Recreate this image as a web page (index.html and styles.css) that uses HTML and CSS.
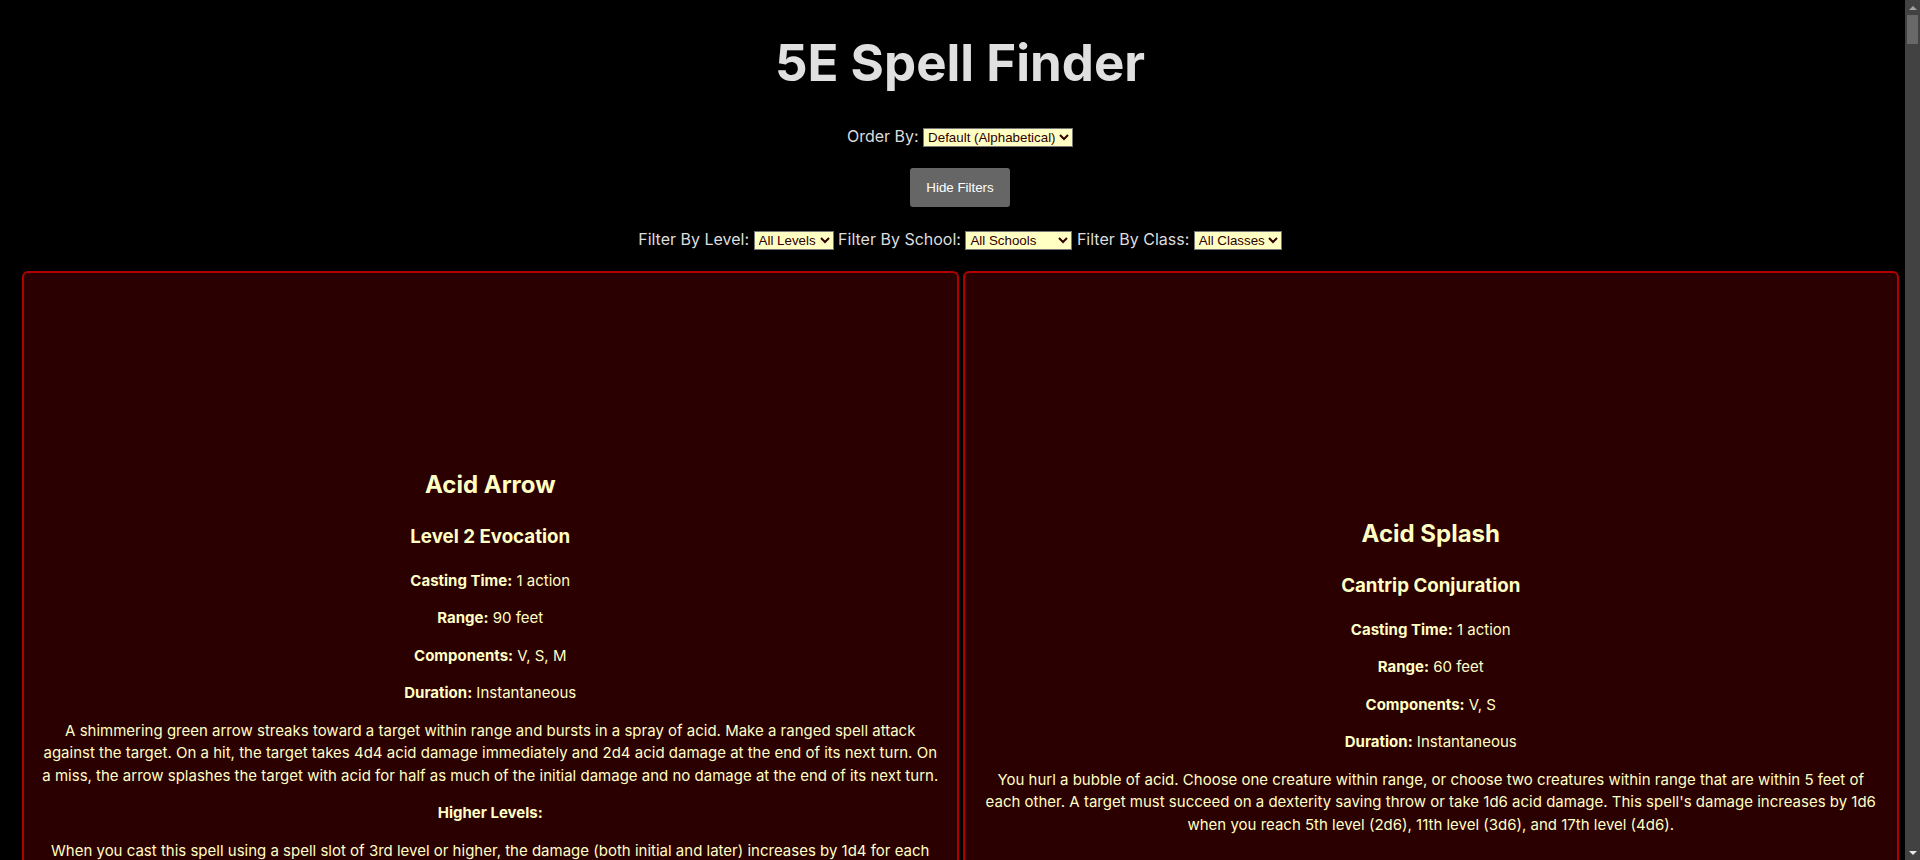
FILE: index.html
```html
<!DOCTYPE html>
<html lang="en">
<head>
<meta charset="utf-8">
<title>5E Spell Finder</title>
<link rel="stylesheet" href="styles.css">
</head>
<body>
<header class="top">
  <h1 class="title">5E Spell Finder</h1>
  <p class="order-row">
    <label for="order">Order By:</label>
    <select id="order" class="pick">
      <option>Default (Alphabetical)</option>
      <option>Level</option>
      <option>School</option>
    </select>
  </p>
  <div class="btn-row"><button class="toggle" type="button">Hide Filters</button></div>
  <p class="filter-row">
    <label for="lvl">Filter By Level:</label>
    <select id="lvl" class="pick">
      <option>All Levels</option><option>Cantrip</option><option>Level 1</option><option>Level 2</option><option>Level 3</option><option>Level 4</option><option>Level 5</option><option>Level 6</option><option>Level 7</option><option>Level 8</option><option>Level 9</option>
    </select>
    <label for="school">Filter By School:</label>
    <select id="school" class="pick">
      <option>All Schools</option><option>Abjuration</option><option>Conjuration</option><option>Divination</option><option>Enchantment</option><option>Evocation</option><option>Illusion</option><option>Necromancy</option><option>Transmutation</option>
    </select>
    <label for="cls">Filter By Class:</label>
    <select id="cls" class="pick">
      <option>All Classes</option><option>Bard</option><option>Cleric</option><option>Druid</option><option>Paladin</option><option>Ranger</option><option>Sorcerer</option><option>Warlock</option><option>Wizard</option>
    </select>
  </p>
</header>

<main class="spells">
  <article class="card">
    <div class="card-body">
      <h2 class="name">Acid Arrow</h2>
      <h3 class="kind">Level 2 Evocation</h3>
      <p class="stat"><b>Casting Time:</b> 1 action</p>
      <p class="stat"><b>Range:</b> 90 feet</p>
      <p class="stat"><b>Components:</b> V, S, M</p>
      <p class="stat"><b>Duration:</b> Instantaneous</p>
      <p class="desc">A shimmering green arrow streaks toward a target within range and bursts in a spray of acid. Make a ranged spell attack against the target. On a hit, the target takes 4d4 acid damage immediately and 2d4 acid damage at the end of its next turn. On a miss, the arrow splashes the target with acid for half as much of the initial damage and no damage at the end of its next turn.</p>
      <p class="stat"><b>Higher Levels:</b></p>
      <p class="desc">When you cast this spell using a spell slot of 3rd level or higher, the damage (both initial and later) increases by 1d4 for each slot level above 2nd.</p>
    </div>
  </article>
  <article class="card">
    <div class="card-body">
      <h2 class="name">Acid Splash</h2>
      <h3 class="kind">Cantrip Conjuration</h3>
      <p class="stat"><b>Casting Time:</b> 1 action</p>
      <p class="stat"><b>Range:</b> 60 feet</p>
      <p class="stat"><b>Components:</b> V, S</p>
      <p class="stat"><b>Duration:</b> Instantaneous</p>
      <p class="desc">You hurl a bubble of acid. Choose one creature within range, or choose two creatures within range that are within 5 feet of each other. A target must succeed on a dexterity saving throw or take 1d6 acid damage. This spell's damage increases by 1d6 when you reach 5th level (2d6), 11th level (3d6), and 17th level (4d6).</p>
    </div>
  </article>
  <article class="card">
    <div class="card-body">
      <h2 class="name">Aid</h2>
      <h3 class="kind">Level 2 Abjuration</h3>
      <p class="stat"><b>Casting Time:</b> 1 action</p>
      <p class="stat"><b>Range:</b> 30 feet</p>
      <p class="stat"><b>Components:</b> V, S, M</p>
      <p class="stat"><b>Duration:</b> 8 hours</p>
      <p class="desc">Your spell bolsters your allies with toughness and resolve. Choose up to three creatures within range. Each target's hit point maximum and current hit points increase by 5 for the duration.</p>
      <p class="stat"><b>Higher Levels:</b></p>
      <p class="desc">When you cast this spell using a spell slot of 3rd level or higher, a target's hit points increase by an additional 5 for each slot level above 2nd.</p>
    </div>
  </article>
  <article class="card">
    <div class="card-body">
      <h2 class="name">Alarm</h2>
      <h3 class="kind">Level 1 Abjuration</h3>
      <p class="stat"><b>Casting Time:</b> 1 minute</p>
      <p class="stat"><b>Range:</b> 30 feet</p>
      <p class="stat"><b>Components:</b> V, S, M</p>
      <p class="stat"><b>Duration:</b> 8 hours</p>
      <p class="desc">You set an alarm against unwanted intrusion. Choose a door, a window, or an area within range that is no larger than a 20-foot cube. Until the spell ends, an alarm alerts you whenever a Tiny or larger creature touches or enters the warded area.</p>
    </div>
  </article>
</main>

<div class="scrollbar" aria-hidden="true">
  <span class="sb-btn sb-up"></span>
  <span class="sb-thumb"></span>
  <span class="sb-track"></span>
  <span class="sb-btn sb-down"></span>
</div>
</body>
</html>
```

FILE: styles.css
```css
html {
  color-scheme: dark;
  background: #000;
}

body {
  margin: 0;
  overflow-x: hidden;
  background: #000;
  color: #dddddd;
  font-family: Inter, "Noto Sans", sans-serif;
  font-size: 16px;
}

.top {
  text-align: center;
}

.title {
  margin: 32px 0 33px;
  font-size: 51px;
  font-weight: 700;
  color: #e0e0e0;
}

.order-row {
  margin: 16px 0 0;
}

.btn-row {
  margin-top: 21px;
}

.toggle {
  font-family: "Liberation Sans", Arial, sans-serif;
  font-size: 13.333px;
  color: #ffffff;
  background: #666666;
  border: none;
  border-radius: 3px;
  padding: 12px 16px;
  cursor: pointer;
}

.filter-row {
  margin: 22px 0 0;
}

.pick {
  font-family: "Liberation Sans", Arial, sans-serif;
  font-size: 13.333px;
  color: #300000;
  background-color: #ffffc4;
  border: 1px solid #767676;
  border-radius: 0;
  color-scheme: light;
}

.spells {
  display: grid;
  grid-template-columns: 1fr 1fr;
  gap: 4px;
  padding: 0 21px 20px 22px;
  margin-top: 21px;
}

.card {
  display: flex;
  flex-direction: column;
  justify-content: center;
  text-align: center;
  background: #2b0000;
  border: 2px solid #b00000;
  border-radius: 6px;
  padding: 174px 16px;
  color: #ffffc4;
  line-height: 1.5;
}

.name {
  font-size: 24px;
  margin: 20px 0;
}

.kind {
  font-size: 18.72px;
  margin: 18.72px 0;
}

.stat,
.desc {
  font-size: 15px;
  margin: 15px 0;
}

/* page scrollbar, painted over the right edge */
.scrollbar {
  position: fixed;
  top: 0;
  right: 0;
  width: 15px;
  height: 100vh;
  background: #424242;
  display: flex;
  flex-direction: column;
  align-items: center;
}

.sb-btn {
  flex: 0 0 15px;
  width: 15px;
  display: flex;
  align-items: center;
  justify-content: center;
}

.sb-up::before {
  content: "";
  border-left: 4px solid transparent;
  border-right: 4px solid transparent;
  border-bottom: 4px solid #a3a3a3;
}

.sb-down::before {
  content: "";
  border-left: 4px solid transparent;
  border-right: 4px solid transparent;
  border-top: 4px solid #e8e8e8;
}

.sb-thumb {
  flex: 0 0 29px;
  width: 11px;
  background: #686868;
}

.sb-track {
  flex: 1;
}
```
